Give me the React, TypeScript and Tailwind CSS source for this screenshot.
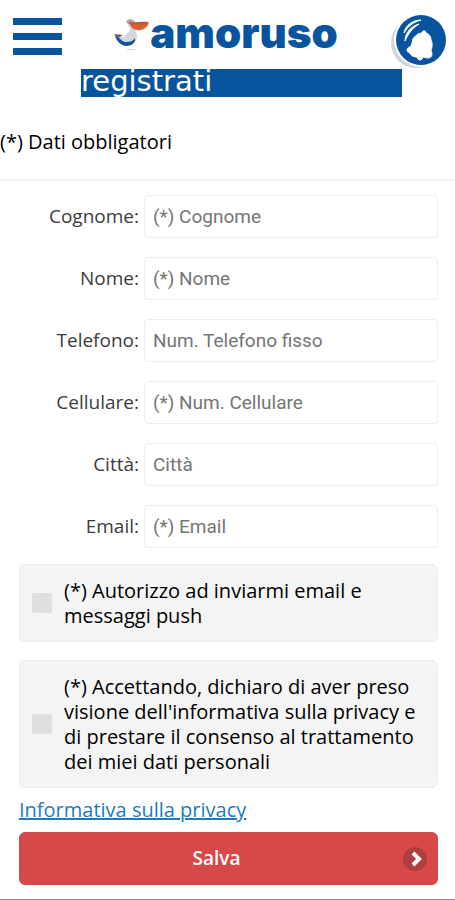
const fields = [
    { id: 'cognome', label: 'Cognome:', placeholder: '(*) Cognome', type: 'text' },
    { id: 'nome', label: 'Nome:', placeholder: '(*) Nome', type: 'text' },
    { id: 'telefono', label: 'Telefono:', placeholder: 'Num. Telefono fisso', type: 'tel' },
    { id: 'cellulare', label: 'Cellulare:', placeholder: '(*) Num. Cellulare', type: 'tel' },
    { id: 'citta', label: 'Città:', placeholder: 'Città', type: 'text' },
    { id: 'email', label: 'Email:', placeholder: '(*) Email', type: 'email' },
]

const consents = [
    { id: 'push', text: '(*) Autorizzo ad inviarmi email e messaggi push' },
    {
        id: 'privacy',
        text: "(*) Accettando, dichiaro di aver preso visione dell'informativa sulla privacy e di prestare il consenso al trattamento dei miei dati personali",
    },
]

function Pelican() {
    return (
        <svg viewBox="0 0 36 34" className="h-[34px] w-9" aria-hidden="true">
            <path d="M13 4c1-3 6-4 8 0 1 3-2 4 0 8 2 4 3 7 1 11-2 3-5 4-9 3-5-1-8-4-10-8 5 2 8 1 9-1 1-3 5-3 4-7-1-2-3-3-3-6z" fill="#d5d8df" />
            <path d="M12 4c1-3 5-4 8-1l2 2-7 1z" fill="#c49a8c" />
            <path d="M15 5c6 1 13-1 20 0-2 5-7 8-12 7-4 0-6-3-8-7z" fill="#dc602b" />
            <path d="M15 4c6 1 13-1 20 0-4 3-13 3-20 2z" fill="#a5604a" />
            <path d="M1 17c4 1 6 7 11 7 4 0 7-1 9-4 1 4-3 8-8 8C7 28 2 23 1 17z" fill="#175696" />
            <path d="M0 16l9 1-5 3z" fill="#725f65" />
            <path d="M13 31h8v1h-8z" fill="#dcdce0" />
        </svg>
    )
}

function Bell() {
    return (
        <svg viewBox="0 0 58 58" className="h-[58px] w-[58px]" aria-hidden="true">
            <circle cx="26" cy="31" r="25" fill="#d2d3db" />
            <circle cx="31" cy="28" r="27" fill="#fff" />
            <circle cx="31" cy="28" r="25" fill="#08549e" />
            <path d="M14 21c1-7 8-13 17-13-7 2-12 5-17 13z" fill="#fff" stroke="#fff" strokeLinejoin="round" />
            <path d="M15 29c0-8 6-15 14-17-6 4-10 8-14 17z" fill="#fff" stroke="#fff" strokeLinejoin="round" />
            <path
                d="M32 21c0-3 4-3 4 0 3 1 5 3 5 7 2 4 1 7 0 11 2 3 1 7-3 7-2 0-4-1-5-1-1 4-5 4-6 0-3 0-6-1-7-4-4-1-4-5 0-6 2-2 2-5 3-8 2-3 5-6 9-6z"
                fill="#fff"
                stroke="#fff"
                strokeLinejoin="round"
            />
        </svg>
    )
}

export default function App() {
    return (
        <div className="flex min-h-screen flex-col bg-white font-['Open_Sans',sans-serif] text-black">
            <header>
                <div className="flex h-[69px] items-start justify-between pr-[7px] pl-[13px]">
                    <button type="button" aria-label="Menu" className="mt-[18px] flex w-[49px] flex-col gap-2">
                        <span className="h-[7px] w-full bg-[#08549e]" />
                        <span className="h-[7px] w-full bg-[#08549e]" />
                        <span className="h-[7px] w-full bg-[#08549e]" />
                    </button>
                    <div className="mt-[18px] flex">
                        <Pelican />
                        <span className="-mt-1 font-['Inter',sans-serif] text-[42px] leading-[38px] font-black text-[#08549e]">
                            amoruso
                        </span>
                    </div>
                    <button type="button" aria-label="Notifiche" className="mt-3">
                        <Bell />
                    </button>
                </div>
                <h1 className="mr-[53px] ml-[81px] h-7 bg-[#06549d] font-['DejaVu_Sans',sans-serif] text-[29px] leading-6 text-white">
                    registrati
                </h1>
            </header>

            <p className="border-b-2 border-[#f4f4f4] pt-8 pb-6 text-[20px] leading-[26px]">
                (*) Dati obbligatori
            </p>

            <form className="flex flex-col pt-[14px] pr-[17px] pb-[14px] pl-[19px]" onSubmit={(e) => e.preventDefault()}>
                <div className="mb-4 flex flex-col gap-[19px]">
                    {fields.map((field) => (
                        <div key={field.id} className="flex items-center gap-[5px]">
                            <label htmlFor={field.id} className="w-[120px] shrink-0 text-right text-[19px] text-[#3c3c3c]">
                                {field.label}
                            </label>
                            <input
                                id={field.id}
                                type={field.type}
                                placeholder={field.placeholder}
                                className="h-[43px] min-w-0 flex-1 rounded-sm border border-[#ededed] bg-white px-2 font-['Roboto',sans-serif] text-[19px] placeholder:text-[#757575]"
                            />
                        </div>
                    ))}
                </div>

                <div className="flex flex-col gap-[18px]">
                    {consents.map((consent) => (
                        <div key={consent.id} className="flex items-center gap-3 rounded-md border border-[#ededed] bg-[#f4f4f4] px-3 py-[13px]">
                            <input
                                id={consent.id}
                                type="checkbox"
                                className="h-5 w-5 shrink-0 appearance-none rounded-xs bg-[#dfdfdf] checked:bg-[#08549e]"
                            />
                            <label htmlFor={consent.id} className="text-[20px] leading-[25px]">
                                {consent.text}
                            </label>
                        </div>
                    ))}
                </div>

                <a href="#privacy" className="mt-2 self-start text-[20px] leading-7 text-[#1d7bbd] underline">
                    Informativa sulla privacy
                </a>

                <button
                    type="submit"
                    className="mt-2 flex h-[53px] items-center rounded-md border border-[#c94b4b] bg-[#d94848] px-[10px] text-[19px] font-semibold text-white"
                >
                    <span className="flex-1 text-center">Salva</span>
                    <svg viewBox="0 0 24 24" className="h-6 w-6" aria-hidden="true">
                        <circle cx="12" cy="12" r="12" fill="#b03e3e" />
                        <path d="M10 6l6 6-6 6" fill="none" stroke="#fff" strokeWidth="4" />
                    </svg>
                </button>
            </form>

            <div className="h-0.5 bg-[#8a8a8a]" />
        </div>
    )
}
